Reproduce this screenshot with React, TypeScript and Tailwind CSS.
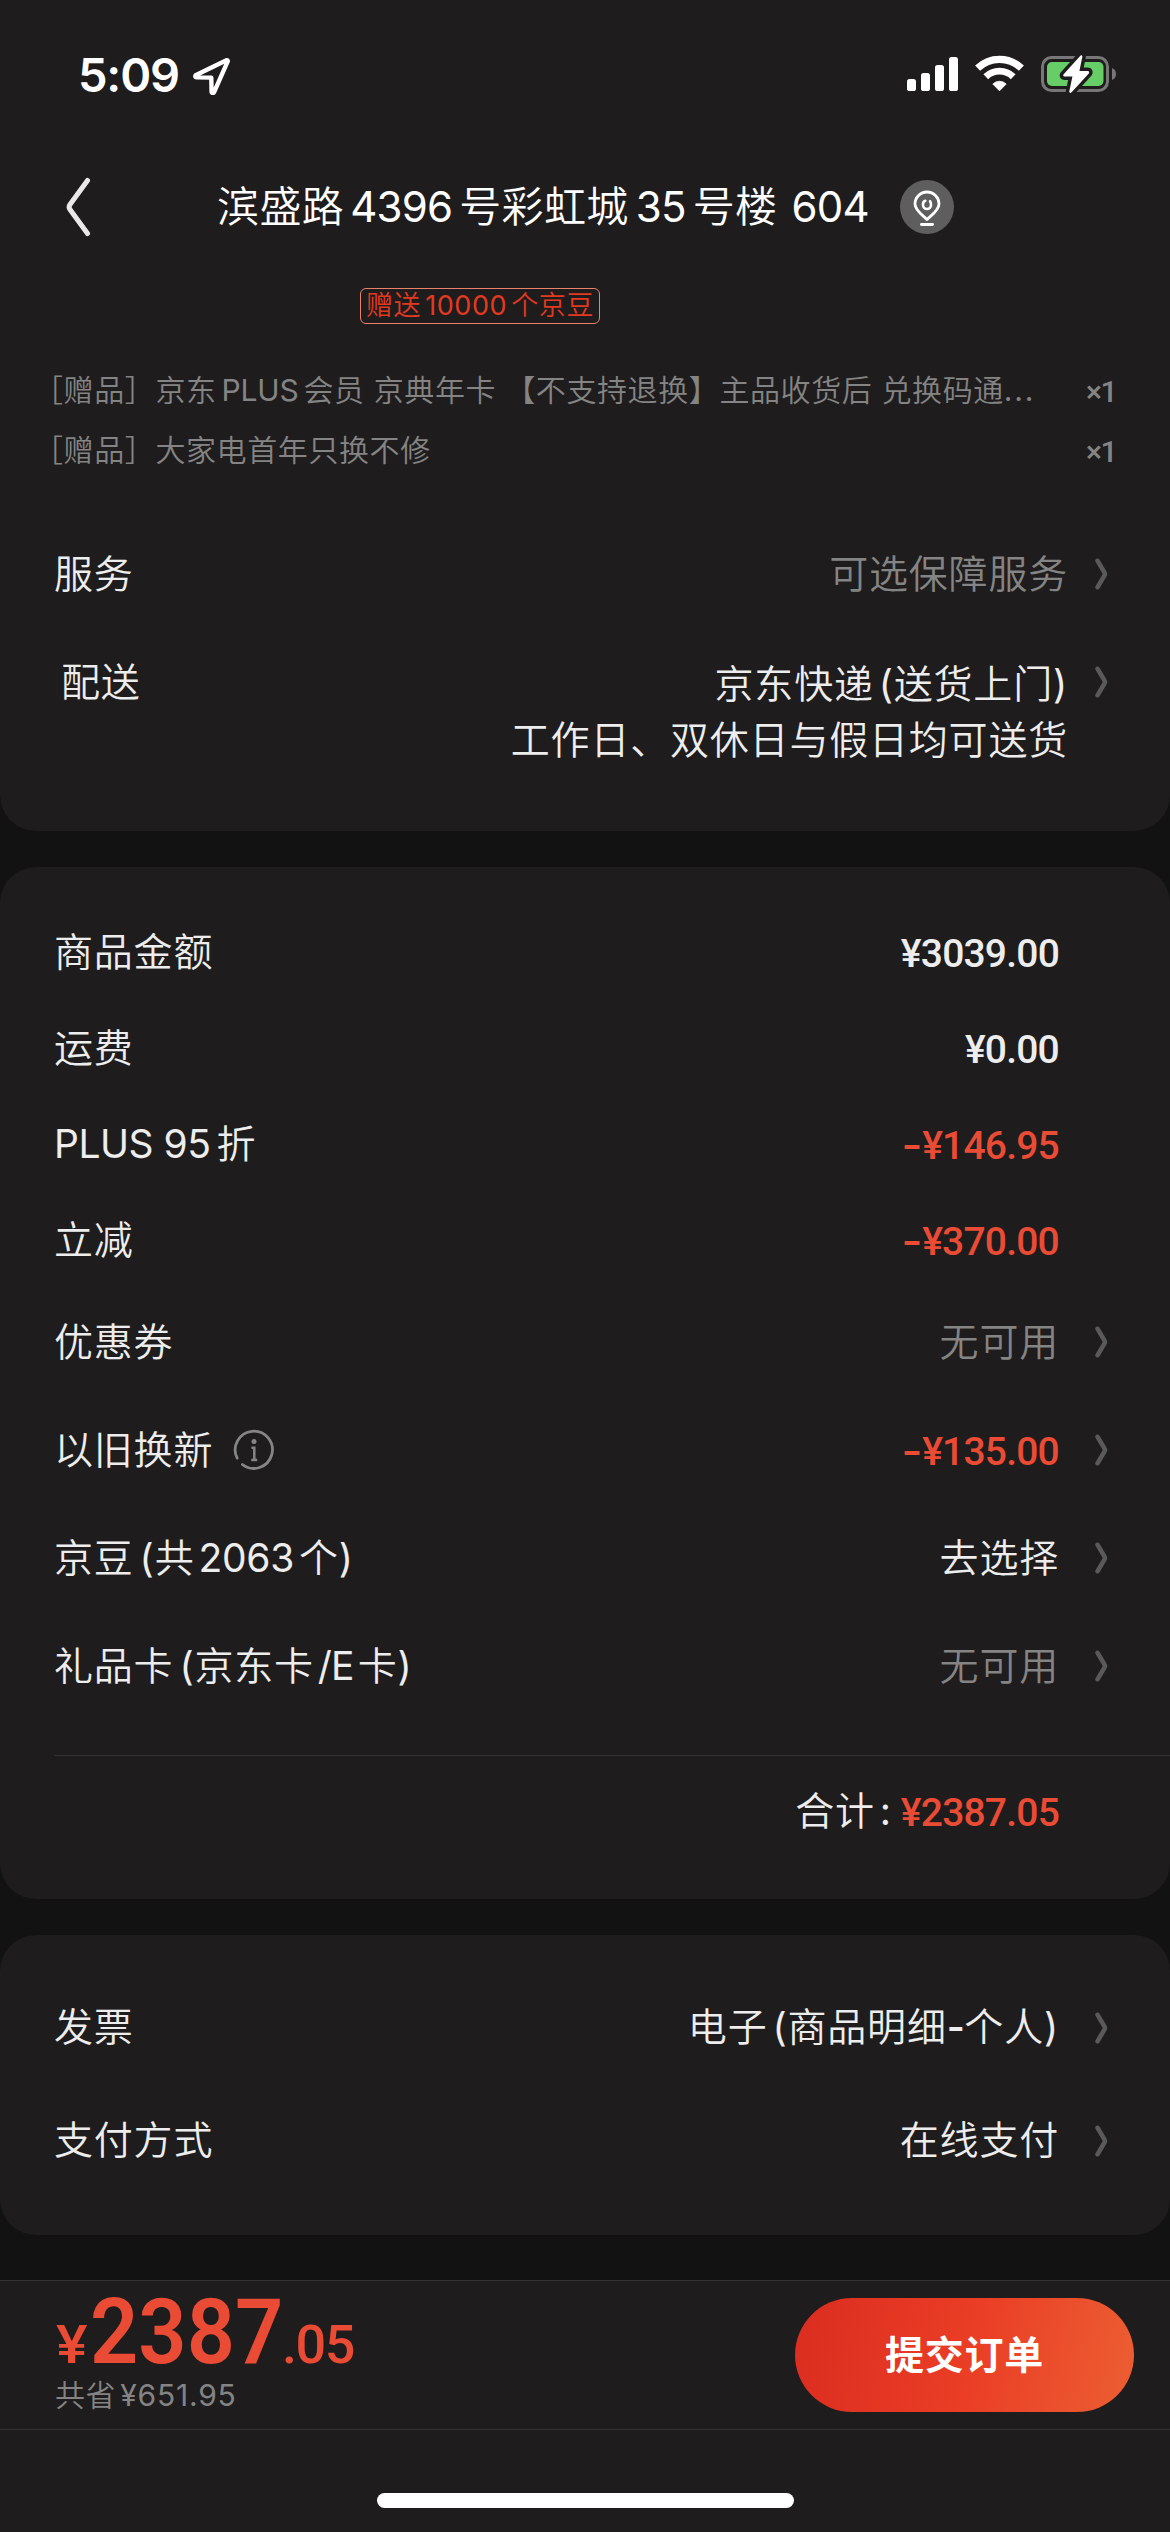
import React from "react";
import clsx from "clsx";

function Latin({ children, className }: { children: React.ReactNode; className?: string }) {
  return <span className={clsx("font-normal", className)}>{children}</span>;
}

function Chevron() {
  return (
    <svg width="14" height="32" viewBox="0 0 14 32" fill="none">
      <path
        d="M2.6 2.8 9.4 14.4Q10.4 16 9.4 17.6L2.6 29.2"
        stroke="#5a5a5a"
        strokeWidth="4.600"
        strokeLinecap="round"
      />
    </svg>
  );
}

function StatusBar() {
  return (
    <div className="flex h-[141px] items-start justify-between pt-[53px] pr-[53px] pl-[78px]">
      <div className="flex items-center gap-[13px]">
        <span className="text-[47px] leading-[43px] font-semibold tracking-[-1.2px] text-white">
          5:09
        </span>
        <svg width="40" height="40" viewBox="0 0 40 40" fill="none">
          <path
            d="M34.5 5.2 3.6 20.3Q2.6 22 4.4 22.4L19.3 22.6 19.6 37.2Q20.6 39 22 37.4L35.8 6.2Q35.8 4.8 34.5 5.2Z"
            stroke="#fff"
            strokeWidth="4.4"
            strokeLinejoin="round"
          />
        </svg>
      </div>
      <div className="flex items-start gap-[17px]">
        <svg width="51" height="42" viewBox="0 0 51 42" fill="#fff">
          <rect x="0" y="26" width="9" height="12" rx="2.6" />
          <rect x="14" y="20" width="9" height="18" rx="2.6" />
          <rect x="28" y="12" width="9" height="26" rx="2.6" />
          <rect x="42" y="4" width="9" height="34" rx="2.6" />
        </svg>
        <svg width="49" height="42" viewBox="0 0 49 42" fill="none" stroke="#fff">
          <path d="M2.6 15.2A31.5 31.5 0 0 1 46.4 15.2" strokeWidth="7.2" />
          <path d="M10.8 23.7A19.6 19.6 0 0 1 38.2 23.7" strokeWidth="6.8" />
          <path
            d="M24.5 37.8 17.8 31A9.5 9.5 0 0 1 31.2 31Z"
            fill="#fff"
            strokeWidth="0.8"
            strokeLinejoin="round"
          />
        </svg>
        <svg width="76" height="42" viewBox="0 0 76 42" fill="none">
          <rect x="1.5" y="4.5" width="65" height="33" rx="9" stroke="#777" strokeWidth="3" />
          <path d="M71 15q4 1.600 4 6t-4 6z" fill="#777" />
          <rect x="6" y="9" width="56.500" height="24" rx="5" fill="#67ce67" />
          <path
            d="M39.600 2.600 22.400 21.500Q21.600 23.400 23.400 23.600H31.400L28.200 38.800Q28.800 40.600 30.400 39.400L47.800 20.400Q48.800 18.200 46.800 18H38.400L41.400 3.600Q41 1.800 39.600 2.600Z"
            fill="#fff"
            stroke="#1e1c1d"
            strokeWidth="7"
            strokeLinejoin="round"
            paintOrder="stroke"
          />
        </svg>
      </div>
    </div>
  );
}

function Header() {
  return (
    <header className="flex h-[132px] items-center pl-[65px]">
      <svg width="28" height="62" viewBox="0 0 28 62" fill="none">
        <path
          d="M22.500 4.500 5 28.500Q3.200 31 5 33.500L22.500 57.500"
          stroke="#e9e9e9"
          strokeWidth="5"
          strokeLinecap="round"
        />
      </svg>
      <h1 className="ml-[124px] text-[42px] leading-[60px] tracking-[0.4px] whitespace-nowrap text-white">
        滨盛路<Latin className="mr-[7px] ml-[6px] tracking-[-0.8px]">4396</Latin>号彩虹城
        <Latin className="mx-[7px] tracking-[-0.8px]">35</Latin>号楼
        <Latin className="ml-[14px] tracking-[-0.8px]">604</Latin>
      </h1>
      <span className="ml-[31px] flex size-[54px] items-center justify-center rounded-full bg-[#5e5e5e]">
        <svg width="54" height="54" viewBox="0 0 54 54" fill="none" stroke="#fff" strokeLinecap="round">
          <path
            d="M27 39.500C23 35.500 15 30.500 15 24A12 12 0 0 1 39 24C39 30.500 31 35.500 27 39.500Z"
            strokeWidth="2.800"
            strokeLinejoin="round"
          />
          <path d="M25.300 20.800Q22.800 21.500 23 25A4 4 0 0 0 31 25Q31.200 22.600 30 21.200" strokeWidth="2.600" />
          <path d="M21.400 44.500H32.600" strokeWidth="2.800" />
        </svg>
      </span>
    </header>
  );
}

function GiftLine({ children }: { children: React.ReactNode }) {
  return (
    <div className="flex h-[60px] items-center justify-between pr-[54px] pl-[33px] text-[30px] tracking-[0.6px] whitespace-nowrap text-[#848484]">
      <span>{children}</span>
      <span className="pt-[2px] font-[Roboto] font-medium tracking-[-1.500px]">×1</span>
    </div>
  );
}

type RowProps = {
  label: React.ReactNode;
  value: React.ReactNode;
  arrow?: boolean;
  tone?: "normal" | "muted" | "price" | "discount";
  className: string;
};

function Row({ label, value, arrow, tone = "normal", className }: RowProps) {
  return (
    <div className={clsx("flex items-center pr-[61px] pl-[54px] whitespace-nowrap", className)}>
      <span className="flex flex-1 items-center">{label}</span>
      <span
        className={clsx(
          tone === "muted" && "text-[#848484]",
          tone === "price" && "pt-[4px] font-[Roboto] font-medium tracking-[-0.8px]",
          tone === "discount" && "pt-[3px] font-[Roboto] font-medium tracking-[-0.8px] text-[#ea4b35]"
        )}
      >
        {tone === "discount" && (
          <span className="mr-[1px] inline-block origin-right scale-x-115 font-[Inter] font-semibold">-</span>
        )}
        {value}
      </span>
      <span className="flex w-[50px] justify-end">{arrow && <Chevron />}</span>
    </div>
  );
}

function InfoIcon() {
  return (
    <svg className="ml-[20px]" width="42" height="42" viewBox="0 0 42 42" fill="none" stroke="#858585">
      <path d="M4.200 29.200A18.600 18.600 0 1 1 9.400 35.500" strokeWidth="2.800" strokeLinecap="round" />
      <circle cx="21" cy="12.500" r="2.500" fill="#858585" stroke="none" />
      <path d="M18.400 18.800H21.300V31M18.200 31H24.200" strokeWidth="2.500" />
    </svg>
  );
}

function ProductCard() {
  return (
    <section className="h-[558px] rounded-b-[36px] bg-[#1e1c1d] pt-[15px]">
      <div className="ml-[360px] flex h-[36px] w-[240px] items-center justify-center rounded-[6px] border border-[#e9816b] text-[27px] tracking-[0.6px] whitespace-nowrap text-[#e23a20]">
        赠送<Latin className="mx-[4px]">10000</Latin>个京豆
      </div>
      <div className="mt-[36px]">
        <GiftLine>
          ［赠品］京东<Latin className="mx-[5px] tracking-[-0.200px]">PLUS</Latin>会员 京典年卡 【不支持退换】主品收货后 兑换码通
          <Latin className="tracking-[1.800px]">...</Latin>
        </GiftLine>
        <GiftLine>［赠品］大家电首年只换不修</GiftLine>
      </div>
      <div className="mt-[40px]">
        <div className="flex h-[108px] items-center pr-[61px] pl-[54px]">
          <span className="flex-1">服务</span>
          <span className="text-[#848484]">可选保障服务</span>
          <span className="flex w-[41px] justify-end">
            <Chevron />
          </span>
        </div>
        <div className="flex items-start pt-[27px] pr-[61px] pl-[61px] leading-[56px]">
          <span className="-mt-[1px] flex-1">配送</span>
          <span className="pt-[1px] text-right">
            京东快递<Latin className="ml-[5px]">(</Latin>送货上门<Latin>)</Latin>
            <br />
            工作日、双休日与假日均可送货
          </span>
          <span className="flex h-[54px] w-[41px] items-center justify-end">
            <Chevron />
          </span>
        </div>
      </div>
    </section>
  );
}

function PriceCard() {
  const small = "h-[96px]";
  const large = "h-[108px]";
  return (
    <section className="mt-[36px] h-[1032px] rounded-[36px] bg-[#1e1c1d] pt-[37px]">
      <Row className={small} label="商品金额" value="¥3039.00" tone="price" />
      <Row className={small} label="运费" value="¥0.00" tone="price" />
      <Row
        className={small}
        label={<><Latin className="mr-[6px] tracking-[-0.500px]">PLUS 95</Latin>折</>}
        value="¥146.95"
        tone="discount"
      />
      <Row className={small} label="立减" value="¥370.00" tone="discount" />
      <Row className={large} label="优惠券" value="无可用" tone="muted" arrow />
      <Row
        className={large}
        label={<>以旧换新<InfoIcon /></>}
        value="¥135.00"
        tone="discount"
        arrow
      />
      <Row
        className={large}
        label={
          <span>
            京豆<Latin className="ml-[6px]">(</Latin>共<Latin className="mr-[5px] ml-[4px] tracking-[-0.300px]">2063</Latin>个
            <Latin>)</Latin>
          </span>
        }
        value="去选择"
        arrow
      />
      <Row
        className={large}
        label={
          <span>
            礼品卡<Latin className="ml-[6px]">(</Latin>京东卡<Latin className="mr-[4px] ml-[4px] tracking-[-0.800px]">/E</Latin>卡
            <Latin>)</Latin>
          </span>
        }
        value="无可用"
        tone="muted"
        arrow
      />
      <div className="mt-[35px] ml-[54px] h-px bg-[#333132]" />
      <div className="flex h-[110px] items-center justify-end pt-[1px] pr-[111px]">
        <span>合计</span>
        <span className="mr-[9px] ml-[5px] font-normal">:</span>
        <span className="pt-[3px] font-[Roboto] font-medium tracking-[-0.8px] text-[#ea4b35]">¥2387.05</span>
      </div>
    </section>
  );
}

function PayCard() {
  return (
    <section className="mt-[36px] h-[300px] rounded-[36px] bg-[#1e1c1d] pt-[36px]">
      <Row
        className="h-[113px]"
        label="发票"
        value={
          <>
            电子<Latin className="ml-[5px]">(</Latin>商品明细
            <span className="font-semibold tracking-[-0.500px]">-</span>个人<Latin>)</Latin>
          </>
        }
        arrow
      />
      <Row className="h-[113px]" label="支付方式" value="在线支付" arrow />
    </section>
  );
}

function SubmitBar() {
  return (
    <footer className="mt-[45px] h-[252px] border-t border-[#333132] bg-[#1e1c1d]">
      <div className="flex h-[149px] items-start justify-between border-b border-[#333132] pr-[36px] pl-[55px]">
        <div>
          <div className="flex h-[96px] items-baseline font-[Roboto] leading-[102px] whitespace-nowrap text-[#ea4b35]">
            <span className="ml-[1px] w-[34px] origin-left scale-x-110 text-[54px] font-medium">¥</span>
            <span className="w-[192px] origin-left scale-x-[0.93] text-[91px] font-semibold tracking-normal">2387</span>
            <span className="text-[54px] font-medium tracking-[-1.500px]">.05</span>
          </div>
          <div className="text-[30px] leading-[36px] tracking-[0.6px] text-[#848484]">
            共省<Latin className="ml-[4px] tracking-[0.800px]">¥651.95</Latin>
          </div>
        </div>
        <button className="mt-[17px] h-[114px] w-[339px] rounded-full bg-linear-[100deg,#db2d20,#ea3d25_50%,#ec5e32] font-bold text-white">
          提交订单
        </button>
      </div>
      <div className="mx-auto mt-[63px] h-[15px] w-[417px] rounded-full bg-white" />
    </footer>
  );
}

export default function App() {
  return (
    <div className="h-[2532px] w-[1170px] overflow-hidden bg-[#131213] font-[Inter,'Noto_Sans_CJK_SC',sans-serif] text-[39px] font-[350] tracking-[0.8px] text-[#ededed]">
      <div className="bg-[#1e1c1d]">
        <StatusBar />
        <Header />
      </div>
      <ProductCard />
      <PriceCard />
      <PayCard />
      <SubmitBar />
    </div>
  );
}
